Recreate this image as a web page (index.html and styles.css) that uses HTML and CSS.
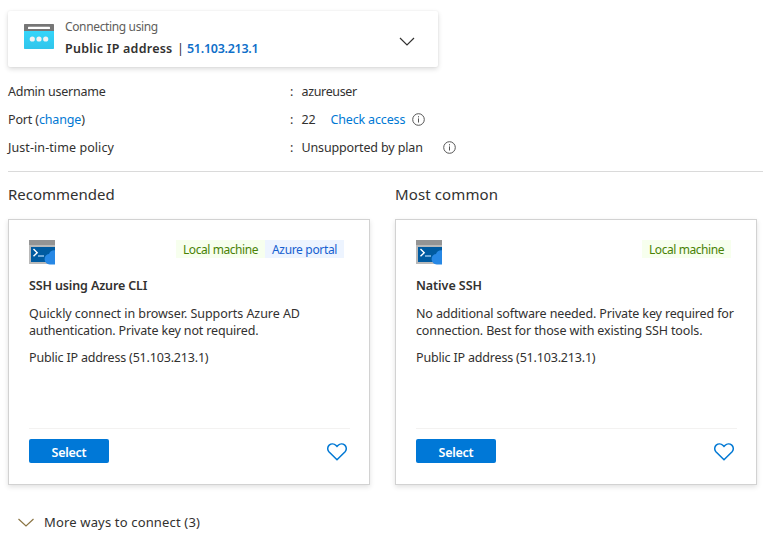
FILE: index.html
```html
<!DOCTYPE html>
<html lang="en">
<head>
<meta charset="utf-8">
<title>Connect</title>
<link rel="stylesheet" href="styles.css">
</head>
<body>
<svg class="defs" aria-hidden="true">
  <symbol id="info" viewBox="0 0 13 13"><circle cx="6.5" cy="6.5" r="5.8" fill="none" stroke="#555" stroke-width="1"/><path d="M6.5 5.4v4.1M6.5 3.2v1.2" stroke="#555" stroke-width="1"/></symbol>
  <symbol id="heart" viewBox="0 0 20 18"><path d="M10 16.8 1.9 8.7C.1 6.7.5 3.6 2.2 2.1 4.3.3 7.1.6 8.8 2.3L10 3.5l1.2-1.2c1.7-1.7 4.5-2 6.6-.2 1.7 1.5 2.1 4.6.3 6.6Z" fill="none" stroke="#0078d4" stroke-width="1.5"/></symbol>
  <symbol id="terminal" viewBox="0 0 26 25">
    <path fill="#b9b9b9" d="M0 0h26v24H0z"/><path fill="#949494" d="M0 0h26v5H0z"/>
    <path fill="#005ba1" d="M2 7h24v15H2z"/>
    <path d="m4.500 9 3.700 3.700-3.700 3.600" fill="none" stroke="#fff" stroke-width="1.400"/><path d="M9 16h6" stroke="#9cc9ee" stroke-width="1.400"/>
    <path fill="#2788e5" d="M26 10.200c-3-.3-5.200 1.300-6 3.900-2.400.2-4.400 2.200-4.400 4.900 0 3 2.200 5.300 5.200 5.500H26Z"/>
  </symbol>
</svg>
<main class="page">
  <section class="picker">
    <svg class="ip-icon" viewBox="0 0 30 25"><defs><linearGradient id="cy" x2="0" y2="1"><stop stop-color="#35d5fa"/><stop offset="1" stop-color="#30c5eb"/></linearGradient></defs><path fill="url(#cy)" d="M0 7h30v17.300a.7.7 0 0 1-.7.700H.7a.7.7 0 0 1-.7-.700Z"/><path fill="#767676" d="M.7 0h28.600a.7.7 0 0 1 .7.700V7H0V.7A.7.7 0 0 1 .7 0Z"/><rect x="4" y="2.800" width="22" height="2.200" rx=".5" fill="#fff"/><g fill="#f2f2f2"><circle cx="8.300" cy="15" r="2.600"/><circle cx="15" cy="15" r="2.600"/><circle cx="21.700" cy="15" r="2.600"/></g></svg>
    <div class="picker-text">
      <div class="caption"><span class="t-conn">Connecting using</span></div>
      <div class="current"><span class="t-pub">Public IP address</span><span class="bar">|</span><span class="ip">51.103.213.1</span></div>
    </div>
    <svg class="chevron" viewBox="0 0 16 9"><path d="m1 1 7 7 7-7" fill="none" stroke="#323130" stroke-width="1.200"/></svg>
  </section>
  <dl class="facts">
    <dt><span class="t-admin">Admin username</span></dt><dd><i>:</i><span class="t-user">azureuser</span></dd>
    <dt><span class="t-port">Port (<a>change</a>)</span></dt><dd><i>:</i><span class="t-22">22</span><a class="check">Check access</a><svg class="info"><use href="#info"/></svg></dd>
    <dt><span class="t-jit">Just-in-time policy</span></dt><dd><i>:</i><span class="t-uns">Unsupported by plan</span><svg class="info far"><use href="#info"/></svg></dd>
  </dl>
  <div class="columns">
    <section>
      <h2><span class="t-rec">Recommended</span></h2>
      <article class="card">
        <header><svg class="terminal"><use href="#terminal"/></svg><div class="tags"><span class="tag local">Local machine</span><span class="tag portal">Azure portal</span></div></header>
        <h3><span class="t-ssh">SSH using Azure CLI</span></h3>
        <p class="desc"><span class="t-q1">Quickly connect in browser. Supports Azure AD</span><br><span class="t-q2">authentication. Private key not required.</span></p>
        <p class="address"><span class="t-addr">Public IP address (51.103.213.1)</span></p>
        <footer><button>Select</button><svg class="heart"><use href="#heart"/></svg></footer>
      </article>
    </section>
    <section>
      <h2><span class="t-most">Most common</span></h2>
      <article class="card">
        <header><svg class="terminal"><use href="#terminal"/></svg><div class="tags"><span class="tag local">Local machine</span></div></header>
        <h3><span class="t-nat">Native SSH</span></h3>
        <p class="desc"><span class="t-n1">No additional software needed. Private key required for</span><br><span class="t-n2">connection. Best for those with existing SSH tools.</span></p>
        <p class="address"><span class="t-addr">Public IP address (51.103.213.1)</span></p>
        <footer><button>Select</button><svg class="heart"><use href="#heart"/></svg></footer>
      </article>
    </section>
  </div>
  <div class="more"><svg viewBox="0 0 16 9"><path d="m.5 1 7.500 7 7.500-7" fill="none" stroke="#8a7443" stroke-width="1.200"/></svg><span class="t-more">More ways to connect (3)</span></div>
</main>
</body>
</html>
```
FILE: styles.css
```css
* { box-sizing: border-box; }
body { margin: 0; background: #fff; color: #323130; font: 12.5px/17px "Noto Sans", "Open Sans", sans-serif; overflow: hidden; }
.defs { display: none; }
svg { display: block; flex: none; }
span, a { white-space: nowrap; }
a { color: #0078d4; }
.page { padding: 11px 0 0 8px; width: 763px; }
.picker { display: flex; width: 430px; height: 56px; padding: 0 23px 0 16px; border-radius: 2px; box-shadow: 0 2px 5px rgba(0,0,0,.15), 0 0 2px rgba(0,0,0,.07); }
.ip-icon { width: 30px; height: 25px; margin-top: 13px; }
.picker-text { margin: 7px 0 0 11px; flex: 1; }
.caption { color: #605e5c; height: 22px; font-size: 12px; }
.t-conn { letter-spacing: -.36px; }
.current { display: flex; font-weight: 600; }
.t-pub { width: 109px; letter-spacing: .24px; }
.bar { width: 13px; padding-left: 3px; font-weight: 400; }
.ip { color: #0f6fc9; letter-spacing: -.28px; }
.chevron { width: 16px; height: 9px; margin-top: 26px; }
.facts { display: grid; grid-template-columns: 282px 1fr; grid-auto-rows: 28px; margin: 16px 0 0; height: 89px; border-bottom: 1px solid #dadada; }
.facts dt, .facts dd { margin: 0; }
.facts dd { display: flex; }
.facts i { width: 11.500px; font-style: normal; }
.t-admin { letter-spacing: -.25px; }
.t-port { letter-spacing: -.15px; }
.t-jit { letter-spacing: .08px; }
.t-user { letter-spacing: -.35px; }
.t-22 { letter-spacing: -.2px; }
.t-uns { letter-spacing: -.14px; }
.check { margin-left: 15px; letter-spacing: -.15px; }
.info { width: 13px; height: 13px; margin: 2px 0 0 6.500px; }
.far { margin-left: 20px; }
.columns { display: flex; gap: 25px; }
h2 { font-size: 15px; font-weight: 400; line-height: 20px; margin: 12px 0 15px; }
.t-most { letter-spacing: .12px; }
.card { display: flex; flex-direction: column; width: 362px; height: 266px; padding: 20px 19px 20px 20px; border: 1px solid #d2d2d2; box-shadow: 0 2px 5px rgba(0,0,0,.12); }
.card header { display: flex; justify-content: space-between; height: 25px; padding-right: 6px; }
.terminal { width: 26px; height: 25px; }
.tags { display: flex; }
.tag { height: 18px; line-height: 20px; padding-left: 7px; font-size: 12px; }
.local { width: 89px; color: #498205; background: #f7ffee; letter-spacing: -.43px; }
.portal { width: 79px; color: #155fd0; background: #edf4ff; letter-spacing: -.33px; }
h3 { font-size: 12.5px; font-weight: 600; margin: 12px 0 0; line-height: 17px; }
.t-ssh { letter-spacing: -.13px; }
.t-nat { letter-spacing: -.06px; }
p { margin: 0; }
.desc { margin-top: 11px; }
.t-q1 { letter-spacing: -.05px; }
.t-q2 { letter-spacing: -.16px; }
.t-n1 { letter-spacing: -.14px; }
.t-n2 { letter-spacing: -.13px; }
.address { margin-top: 10px; letter-spacing: -.18px; }
footer { display: flex; justify-content: space-between; align-items: flex-start; margin-top: auto; height: 36px; border-top: 1px solid #f3f2f1; padding: 10px 3px 0 0; }
button { width: 80px; height: 24px; padding: 3px 0 0; border: 0; border-radius: 2px; background: #0078d7; color: #fff; font: 600 12.5px/21px "Noto Sans", sans-serif; letter-spacing: -.25px; }
.heart { width: 20px; height: 18px; margin-top: 4px; }
.more { display: flex; align-items: center; gap: 10px; margin: 27px 0 0 10px; height: 20px; font-size: 13px; letter-spacing: .16px; }
.more svg { width: 16px; height: 9px; }
```
